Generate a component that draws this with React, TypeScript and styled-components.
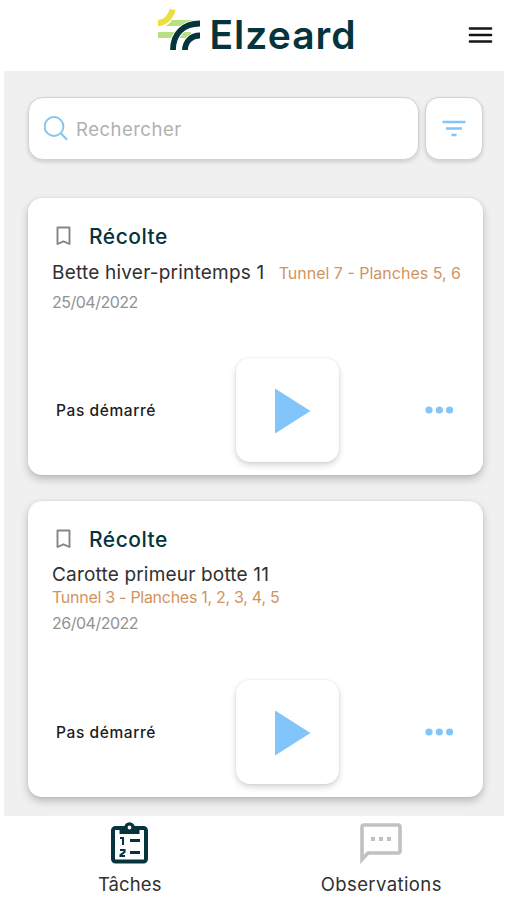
import React from "react";
import styled, { createGlobalStyle } from "styled-components";

const GlobalStyle = createGlobalStyle`
  * { box-sizing: border-box; }
  body { margin: 0; background: #fff; font-family: Inter, "Open Sans", sans-serif; }
  button { border: 0; padding: 0; background: none; font: inherit; cursor: pointer; }
  svg { display: block; flex: none; }
`;

const sky = "#81c5fa";
const pine = "#06343c";

const Screen = styled.div`
  width: 507px;
  height: 900px;
  overflow: hidden;
  display: flex;
  flex-direction: column;
  background: #fff;
`;
const Header = styled.header`
  height: 71px;
  flex: none;
  display: grid;
  grid-template-columns: 1fr auto 1fr;
  padding: 0 14px 0 18px;
`;
const Logo = styled.div`
  grid-column: 2;
  display: flex;
  gap: 9px;
  padding-top: 8px;
`;
const Brand = styled.span`
  width: 145px;
  color: ${pine};
  font-size: 39px;
  font-weight: 600;
  line-height: 54px;
  letter-spacing: 1px;
  white-space: nowrap;
`;
const MenuButton = styled.button`
  grid-column: 3;
  justify-self: end;
  height: 70px;
`;
const Main = styled.main`
  height: 745px;
  flex: none;
  margin: 0 3px 0 4px;
  padding: 26px 21px 0 24px;
  overflow: hidden;
  background: #f0f0f0;
`;
const SearchBar = styled.div`
  display: flex;
  gap: 6px;
  height: 63px;
  margin-bottom: 38px;
`;
const Field = styled.label`
  flex: 1;
  display: flex;
  align-items: center;
  gap: 8px;
  padding-left: 15px;
  border: 1px solid #d2d2d2;
  border-radius: 15px;
  background: #fff;
  box-shadow: 0 2px 4px rgba(0, 0, 0, 0.15);
`;
const Input = styled.input`
  width: 250px;
  padding: 0;
  border: 0;
  outline: 0;
  background: none;
  font: 400 18.5px Inter, sans-serif;
  letter-spacing: 0.5px;
  &::placeholder { color: #b0b0b0; opacity: 1; }
`;
const FilterButton = styled.button`
  && {
    width: 58px;
    display: grid;
    place-items: center;
    border: 1px solid #d2d2d2;
    border-radius: 14px;
    background: #fff;
    box-shadow: 0 2px 4px rgba(0, 0, 0, 0.15);
  }
`;
const Card = styled.article<{ $height: number }>`
  height: ${p => p.$height}px;
  margin-bottom: 26px;
  padding: 22px 22px 13px 24px;
  display: flex;
  flex-direction: column;
  border-radius: 14px;
  background: #fff;
  box-shadow: 0 4px 8px rgba(0, 0, 0, 0.23), 0 0 2px rgba(0, 0, 0, 0.1);
`;
const CardHead = styled.div`
  display: flex;
  align-items: center;
  gap: 17px;
  height: 32px;
  padding-left: 4px;
`;
const Title = styled.h2`
  margin: 0;
  color: ${pine};
  font-size: 21px;
  font-weight: 500;
  letter-spacing: 0.5px;
`;
const Details = styled.div<{ $stacked: boolean }>`
  display: flex;
  flex-direction: ${p => (p.$stacked ? "column" : "row")};
  align-items: ${p => (p.$stacked ? "flex-start" : "center")};
  justify-content: space-between;
  margin-top: ${p => (p.$stacked ? 7 : 8)}px;
  white-space: nowrap;
`;
const Crop = styled.span<{ $spacing: number }>`
  color: #303030;
  font-size: 19px;
  line-height: 26px;
  letter-spacing: ${p => p.$spacing}px;
`;
const Place = styled.span<{ $spacing: number }>`
  margin-top: -1px;
  color: #d1935f;
  font-size: 16px;
  line-height: 20px;
  letter-spacing: ${p => p.$spacing}px;
`;
const DateText = styled.time`
  margin-top: 6px;
  color: #929292;
  font-size: 16px;
  line-height: 20px;
  letter-spacing: -0.5px;
`;
const CardActions = styled.div`
  margin-top: auto;
  display: grid;
  grid-template-columns: 184px 103px 1fr;
  align-items: center;
`;
const Status = styled.span`
  padding: 1px 0 0 4px;
  color: #1c1c1c;
  font-size: 15.5px;
  font-weight: 500;
  letter-spacing: 0.6px;
`;
const PlayButton = styled.button`
  && {
    height: 104px;
    display: grid;
    place-items: center;
    padding: 2px 0 0 11px;
    border-radius: 14px;
    background: #fff;
    box-shadow: 0 3px 6px rgba(0, 0, 0, 0.17), 0 0 2px rgba(0, 0, 0, 0.1);
  }
`;
const MoreButton = styled.button`
  justify-self: end;
  margin-right: 7px;
`;
const TabBar = styled.nav`
  height: 84px;
  flex: none;
  display: grid;
  grid-template-columns: 1fr 1fr;
  padding: 0 0 0 4px;
`;
const Tab = styled.button`
  display: flex;
  flex-direction: column;
  align-items: center;
`;
const TabIcon = styled.span`
  height: 55px;
  padding-top: 6px;
`;
const TabLabel = styled.span<{ $spacing: number }>`
  color: #303030;
  font-size: 18.5px;
  line-height: 27px;
  letter-spacing: ${p => p.$spacing}px;
`;

const LogoMark = () => (
  <svg width="44" height="44" viewBox="0 0 44 44" fill="none">
    <path d="M15 12H36V18H8Q13 16 15 12ZM1 24H34V30H1Z" fill="#b9df83" />
    <path d="M15.500 1.500C14 9 8 15 1 15" stroke="#ece03e" strokeWidth="6" />
    <path d="M16 42C16 26 26 15.500 43 15.500M28 42C28 34 34 27.500 43 27.500" stroke="#fff" strokeWidth="7.500" />
    <path d="M16 42C16 26 26 15.500 43 15.500M28 42C28 34 34 27.500 43 27.500" stroke={pine} strokeWidth="5.800" />
  </svg>
);
const MenuIcon = () => (
  <svg width="25" height="18" viewBox="0 0 25 18">
    <path d="M2 2.500H23M2 9H23M2 15.500H23" stroke="#151515" strokeWidth="2.700" strokeLinecap="round" />
  </svg>
);
const SearchIcon = () => (
  <svg width="24" height="26" viewBox="0 0 24 26" fill="none" stroke="#85c5ef" strokeWidth="2">
    <circle cx="10" cy="10.500" r="9.400" />
    <path d="M16.500 17L23 23.800" />
  </svg>
);
const FilterIcon = () => (
  <svg width="24" height="18" viewBox="0 0 24 18">
    <path d="M.5 2H23.500M4 8.500H20M9.500 15H14.500" stroke={sky} strokeWidth="2.400" />
  </svg>
);
const BookmarkIcon = () => (
  <svg width="16" height="20" viewBox="0 0 16 20">
    <path d="M1.500 1.500H13.500V18L7.500 15.300L1.500 18Z" fill="none" stroke="#858585" strokeWidth="1.900" strokeLinejoin="round" />
  </svg>
);
const PlayIcon = () => (
  <svg width="36" height="46" viewBox="0 0 36 46"><path d="M0 .5L35.500 23L0 45.500Z" fill={sky} /></svg>
);
const MoreIcon = () => (
  <svg width="30" height="8" viewBox="0 0 30 8" fill={sky}>
    <circle cx="5" cy="4" r="3.600" /><circle cx="15.300" cy="4" r="3.600" /><circle cx="25.600" cy="4" r="3.600" />
  </svg>
);
const TasksIcon = () => (
  <svg width="38" height="44" viewBox="0 0 38 44" fill="none" stroke={pine}>
    <rect x="2" y="6" width="33" height="33.500" rx="2.500" strokeWidth="4" />
    <path d="M8.500 6H28.500V12H8.500Z" fill={pine} stroke="none" />
    <circle cx="18.500" cy="5.500" r="3.600" strokeWidth="3.400" fill="#fff" />
    <path d="M19 18.500H29M19 30.500H29" strokeWidth="3.200" />
    <path d="M9 16H12V23M9 28H13.500V30L9.500 33V34H14" strokeWidth="2.100" />
  </svg>
);
const CommentIcon = () => (
  <svg width="42" height="42" viewBox="0 0 42 42">
    <path d="M2 37.500V5Q2 3 4 3H38Q40 3 40 5V29Q40 31 38 31H8Z" fill="none" stroke="#c1c1c1" strokeWidth="3.600" />
    <path d="M11 15H15V19H11ZM19 15H23V19H19ZM27 15H31V19H27Z" fill="#c1c1c1" />
  </svg>
);

const tasks = [
  { crop: "Bette hiver-printemps 1", cropSpacing: 0.22, place: "Tunnel 7 - Planches 5, 6", placeSpacing: 0, date: "25/04/2022", stacked: false, height: 277 },
  { crop: "Carotte primeur botte 11", cropSpacing: 0.18, place: "Tunnel 3 - Planches 1, 2, 3, 4, 5", placeSpacing: -0.28, date: "26/04/2022", stacked: true, height: 296 },
];

export default function App() {
  return (
    <Screen>
      <GlobalStyle />
      <Header>
        <Logo><LogoMark /><Brand>Elzeard</Brand></Logo>
        <MenuButton aria-label="Menu"><MenuIcon /></MenuButton>
      </Header>
      <Main>
        <SearchBar>
          <Field><SearchIcon /><Input placeholder="Rechercher" /></Field>
          <FilterButton aria-label="Filtrer"><FilterIcon /></FilterButton>
        </SearchBar>
        {tasks.map(task => (
          <Card key={task.date} $height={task.height}>
            <CardHead><BookmarkIcon /><Title>Récolte</Title></CardHead>
            <Details $stacked={task.stacked}>
              <Crop $spacing={task.cropSpacing}>{task.crop}</Crop>
              <Place $spacing={task.placeSpacing}>{task.place}</Place>
            </Details>
            <DateText>{task.date}</DateText>
            <CardActions>
              <Status>Pas démarré</Status>
              <PlayButton aria-label="Démarrer"><PlayIcon /></PlayButton>
              <MoreButton aria-label="Plus"><MoreIcon /></MoreButton>
            </CardActions>
          </Card>
        ))}
      </Main>
      <TabBar>
        <Tab><TabIcon><TasksIcon /></TabIcon><TabLabel $spacing={0.1}>Tâches</TabLabel></Tab>
        <Tab><TabIcon><CommentIcon /></TabIcon><TabLabel $spacing={0.4}>Observations</TabLabel></Tab>
      </TabBar>
    </Screen>
  );
}
